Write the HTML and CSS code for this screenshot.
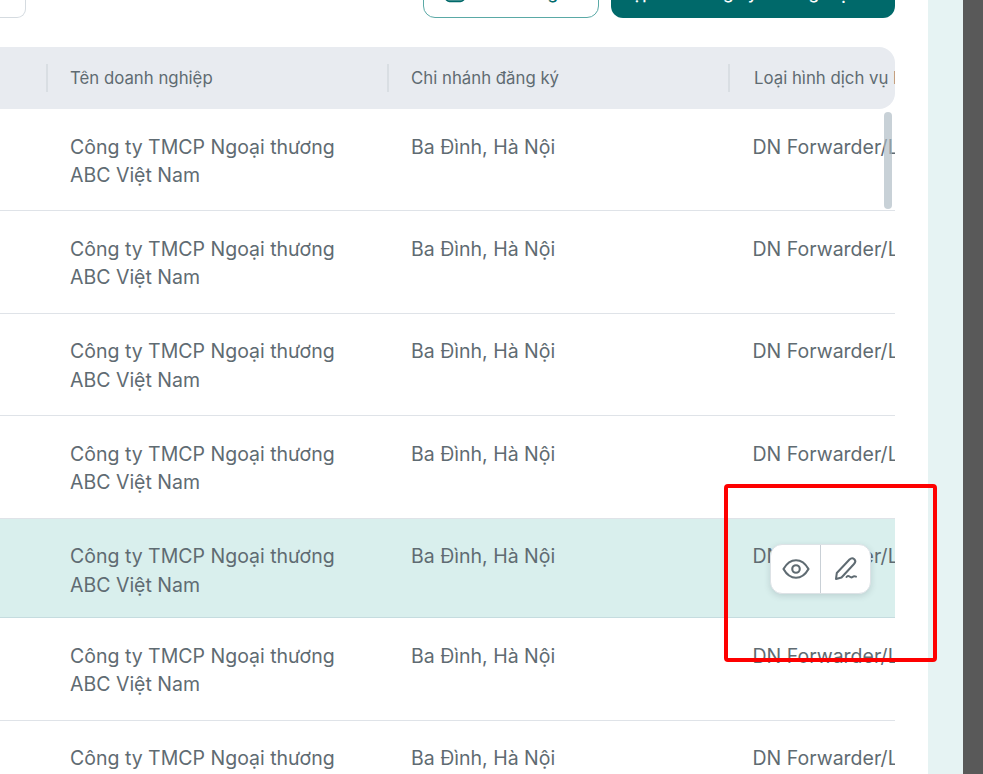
FILE: index.html
```html
<!DOCTYPE html>
<html lang="vi">
<head>
<meta charset="utf-8">
<title>Danh sách doanh nghiệp</title>
<link rel="stylesheet" href="styles.css">
</head>
<body>
<div class="screen">
  <main class="panel">
    <div class="toolbar">
      <div class="filter-btn"></div>
      <div class="spacer"></div>
      <button class="btn btn-outline">
        <svg class="btn-icon" viewBox="0 0 24 24" fill="none" stroke="currentColor" stroke-width="2"><rect x="2" y="3" width="20" height="18" rx="4"/></svg>
        <span>Tải xuống</span>
      </button>
      <button class="btn btn-solid"><span>Nộp đơn đăng ký thương mại</span></button>
    </div>
    <div class="table">
      <div class="thead">
        <div class="th th-first"></div>
        <div class="th">Tên doanh nghiệp</div>
        <div class="th">Chi nhánh đăng ký</div>
        <div class="th th-last">Loại hình dịch vụ Logistics</div>
      </div>
      <div class="tbody">
        <div class="tr">
          <div class="td td-first"></div><div class="td">Công ty TMCP Ngoại thương ABC Việt Nam</div><div class="td">Ba Đình, Hà Nội</div><div class="td td-last">DN Forwarder/Logistics</div>
        </div>
        <div class="tr">
          <div class="td td-first"></div><div class="td">Công ty TMCP Ngoại thương ABC Việt Nam</div><div class="td">Ba Đình, Hà Nội</div><div class="td td-last">DN Forwarder/Logistics</div>
        </div>
        <div class="tr">
          <div class="td td-first"></div><div class="td">Công ty TMCP Ngoại thương ABC Việt Nam</div><div class="td">Ba Đình, Hà Nội</div><div class="td td-last">DN Forwarder/Logistics</div>
        </div>
        <div class="tr">
          <div class="td td-first"></div><div class="td">Công ty TMCP Ngoại thương ABC Việt Nam</div><div class="td">Ba Đình, Hà Nội</div><div class="td td-last">DN Forwarder/Logistics</div>
        </div>
        <div class="tr tr-active">
          <div class="td td-first"></div><div class="td">Công ty TMCP Ngoại thương ABC Việt Nam</div><div class="td">Ba Đình, Hà Nội</div><div class="td td-last">DN Forwarder/Logistics</div>
          <div class="actions">
            <button class="action" aria-label="Xem">
              <svg viewBox="0 0 24 24" width="30" height="30" fill="none" stroke="#5f6b72" stroke-width="1.7" stroke-linecap="round" stroke-linejoin="round"><path d="M2 12c2.600-4.600 6-7 10-7s7.400 2.400 10 7c-2.600 4.600-6 7-10 7s-7.400-2.400-10-7z"/><circle cx="12" cy="12" r="3"/></svg>
            </button>
            <button class="action" aria-label="Sửa">
              <svg viewBox="0 0 28 28" width="28" height="28" fill="none" stroke="#5f6b72" stroke-width="2" stroke-linecap="round" stroke-linejoin="round"><path d="M4 24l.8-6L17.500 4.500c1.500-1.500 3.500-1.500 4.800-.3 1.300 1.300 1.200 3.300-.3 4.800L9.500 22.500z"/><path d="M14.500 22c1-1.300 2-1.300 3-.5s2 1.300 3 .5 2-1 3.500-.3"/></svg>
            </button>
          </div>
        </div>
        <div class="tr">
          <div class="td td-first"></div><div class="td">Công ty TMCP Ngoại thương ABC Việt Nam</div><div class="td">Ba Đình, Hà Nội</div><div class="td td-last">DN Forwarder/Logistics</div>
        </div>
        <div class="tr">
          <div class="td td-first"></div><div class="td">Công ty TMCP Ngoại thương ABC Việt Nam</div><div class="td">Ba Đình, Hà Nội</div><div class="td td-last">DN Forwarder/Logistics</div>
        </div>
      </div>
      <div class="scrollbar"></div>
    </div>
  </main>
  <div class="strip"></div>
  <div class="dark"></div>
</div>
<div class="highlight"></div>
</body>
</html>
```
FILE: styles.css
```css
* { box-sizing: border-box; }
html, body { margin: 0; height: 100%; overflow: hidden; background: #fff; }
body { font-family: Inter, "Liberation Sans", sans-serif; color: #5f6b72; }
.screen { display: flex; width: 983px; height: 774px; overflow: hidden; }
.panel { width: 928px; flex: none; background: #fff; overflow: hidden; }
.strip { width: 35px; flex: none; background: #e6f3f3; }
.dark { flex: 1; background: #595959; }

.toolbar { display: flex; align-items: flex-end; height: 18px; width: 895px; gap: 12px; overflow: hidden; }
.filter-btn { flex: none; width: 26px; height: 40px; border: 1px solid #d5dbe0; border-left: 0; border-radius: 0 9px 9px 0; background: #fff; }
.spacer { flex: 1; }
.btn { flex: none; height: 50px; display: flex; align-items: center; gap: 12px; border-radius: 12px; font: 500 17px Inter, sans-serif; padding: 0; }
.btn-outline { width: 176px; padding-left: 19px; background: #fff; border: 1.5px solid #5aa9a6; color: #00696a; }
.btn-solid { width: 284px; padding-left: 8px; background: #00696a; border: 0; color: #fff; }
.btn-icon { width: 24px; height: 22px; }

.table { position: relative; width: 895px; margin-top: 29px; overflow: hidden; }
.thead { display: grid; grid-template-columns: 46px 341px 341px 167px; align-items: center; height: 62px; background: #e8ebf0; border-radius: 0 16px 16px 0; font-size: 16.800px; font-weight: 400; }
.th { height: 28px; line-height: 28px; padding-left: 22px; border-left: 2px solid #d9dee3; white-space: nowrap; overflow: hidden; }
.th-first { border-left: 0; padding: 0; }
.th-last { padding-left: 24px; }

.tbody { display: flex; flex-direction: column; }
.tr { position: relative; display: grid; grid-template-columns: 47px 341px 341px 166px; height: 102.400px; border-bottom: 1px solid #dfe3e8; font-size: 19.500px; line-height: 28.500px; }
.tr-active { height: 99.800px; background: #d9efed; border-bottom-color: #c5dcdf; }
.td { padding: 23.500px 20px 0 23px; }
.td-first { padding: 0; }
.td-last { padding: 23.500px 0 0 23.500px; white-space: nowrap; overflow: hidden; }

.actions { position: absolute; top: 25px; left: 770px; display: flex; width: 101px; height: 50px; background: #fff; border: 1px solid #dde2e6; border-radius: 12px; box-shadow: 0 2px 6px rgba(60, 80, 90, .18); overflow: hidden; }
.action { flex: 1; display: flex; align-items: center; justify-content: center; padding: 0; background: none; border: 0; }
.action + .action { border-left: 1.500px solid #c9d0d6; }

.scrollbar { position: absolute; top: 65px; right: 3px; width: 8px; height: 97px; border-radius: 4px; background: rgba(170, 184, 194, .65); }

.highlight { position: fixed; left: 724px; top: 484px; width: 213px; height: 178px; border: 4px solid #fe0000; border-radius: 4px; pointer-events: none; }
```
